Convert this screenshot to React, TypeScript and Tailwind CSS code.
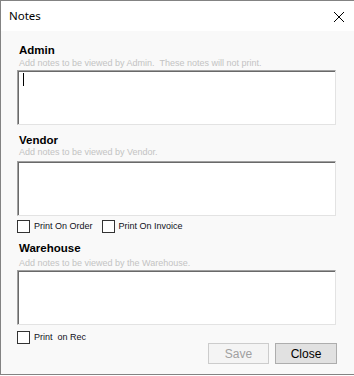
import React from "react";

function Check({ label }: { label: string }) {
  return (
    <div className="flex items-center h-[13px]">
      <div className="w-[13px] h-[13px] border border-[#333333] bg-white" />
      <span className="ml-[4px] text-[9px] leading-[13px] text-[#10101a] whitespace-pre">{label}</span>
    </div>
  );
}

function Box({ cursor, mt }: { cursor?: boolean; mt: string }) {
  return (
    <div className={`${mt} w-[319px] h-[55px] bg-white border-t border-l border-t-[#a0a0a0] border-l-[#a0a0a0] border-b border-r border-b-[#e3e3e3] border-r-[#e3e3e3]`}>
      <div className="w-full h-full border-t border-l border-t-[#696969] border-l-[#696969]">
        {cursor && <div className="ml-[4px] mt-[1px] w-[1px] h-[13px] bg-black" />}
      </div>
    </div>
  );
}

export default function App() {
  return (
    <div
      className="w-[354px] h-[376px] bg-white"
      style={{ fontFamily: '"Liberation Sans", Arial, sans-serif' }}
    >
      <div className="w-[354px] h-[375px] border-l border-t border-b border-[#838383] bg-[#f9f9f9] flex flex-col">
        <div className="h-[30px] bg-white flex items-center justify-between pl-[8px] pr-[8px]">
          <span className="text-[11.5px] text-[#000000]" style={{ fontFamily: '"Noto Sans", sans-serif' }}>
            Notes
          </span>
          <svg width="12" height="12" viewBox="0 0 12 12" className="mr-[1px] mt-[2px]">
            <path d="M1 1 L11 11 M11 1 L1 11" stroke="#000" strokeWidth="1" />
          </svg>
        </div>
        <div className="flex flex-col pl-[16px] pt-[12px]">
          <div className="pl-[2px] text-[11.5px] font-bold leading-[14px] text-black">Admin</div>
          <div className="mt-[1px] pl-[2px] text-[9px] leading-[11px] text-[#c3c3c3] whitespace-pre">
            Add notes to be viewed by Admin.  These notes will not print.
          </div>
          <Box cursor mt="mt-[1px]" />

          <div className="mt-[8px] pl-[2px] text-[11.5px] font-bold leading-[14px] text-black">Vendor</div>
          <div className="pl-[2px] text-[9px] leading-[11px] text-[#c3c3c3]">Add notes to be viewed by Vendor.</div>
          <Box mt="mt-[3px]" />
          <div className="mt-[4px] flex items-center">
            <Check label="Print On Order" />
            <div className="ml-[9px]">
              <Check label="Print On Invoice" />
            </div>
          </div>

          <div className="mt-[8px] pl-[2px] text-[11.5px] font-bold leading-[14px] text-black">Warehouse</div>
          <div className="mt-[3px] pl-[2px] text-[9px] leading-[11px] text-[#c3c3c3]">
            Add notes to be viewed by the Warehouse.
          </div>
          <Box mt="mt-[1px]" />
          <div className="mt-[6px] flex w-[320px] justify-between">
            <div className="self-start">
              <Check label="Print  on Rec" />
            </div>
            <div className="mt-[12px] flex gap-[6px]">
              <div className="w-[61px] h-[21px] border border-[#cccccc] bg-[#f4f4f4] flex items-center justify-center text-[12px] text-[#a0a0a0]">
                Save
              </div>
              <div className="w-[62px] h-[21px] border border-[#adadad] bg-[#e1e1e1] flex items-center justify-center text-[12px] text-black">
                Close
              </div>
            </div>
          </div>
        </div>
      </div>
    </div>
  );
}
